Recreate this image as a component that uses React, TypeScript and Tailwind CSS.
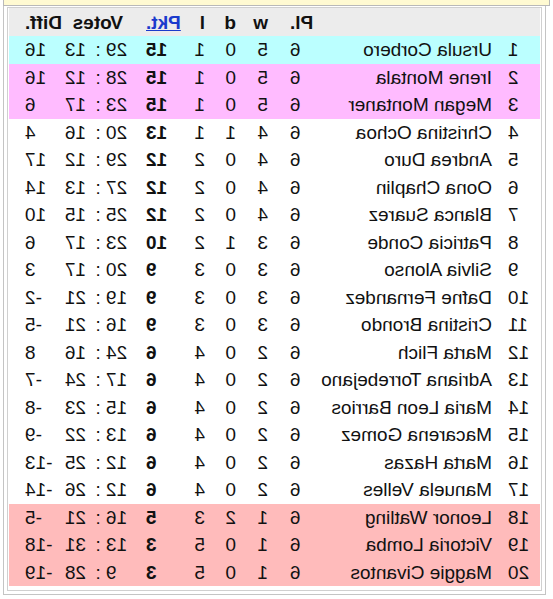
import React from "react";

type Row = [number, string, number, number, number, number, number, number, number, number, string];

const rows: Row[] = [
  [1, "Ursula Corbero", 6, 5, 0, 1, 15, 29, 13, 16, "bg-[#bbffff]"],
  [2, "Irene Montala", 6, 5, 0, 1, 15, 28, 12, 16, "bg-[#ffbbff]"],
  [3, "Megan Montaner", 6, 5, 0, 1, 15, 23, 17, 6, "bg-[#ffbbff]"],
  [4, "Christina Ochoa", 6, 4, 1, 1, 13, 20, 16, 4, "bg-white"],
  [5, "Andrea Duro", 6, 4, 0, 2, 12, 29, 12, 17, "bg-white"],
  [6, "Oona Chaplin", 6, 4, 0, 2, 12, 27, 13, 14, "bg-white"],
  [7, "Blanca Suarez", 6, 4, 0, 2, 12, 25, 15, 10, "bg-white"],
  [8, "Patricia Conde", 6, 3, 1, 2, 10, 23, 17, 6, "bg-white"],
  [9, "Silvia Alonso", 6, 3, 0, 3, 9, 20, 17, 3, "bg-white"],
  [10, "Dafne Fernandez", 6, 3, 0, 3, 9, 19, 21, -2, "bg-white"],
  [11, "Cristina Brondo", 6, 3, 0, 3, 9, 16, 21, -5, "bg-white"],
  [12, "Marta Flich", 6, 2, 0, 4, 6, 24, 16, 8, "bg-white"],
  [13, "Adriana Torrebejano", 6, 2, 0, 4, 6, 17, 24, -7, "bg-white"],
  [14, "Maria Leon Barrios", 6, 2, 0, 4, 6, 15, 23, -8, "bg-white"],
  [15, "Macarena Gomez", 6, 2, 0, 4, 6, 13, 22, -9, "bg-white"],
  [16, "Marta Hazas", 6, 2, 0, 4, 6, 12, 25, -13, "bg-white"],
  [17, "Manuela Velles", 6, 2, 0, 4, 6, 12, 26, -14, "bg-white"],
  [18, "Leonor Watling", 6, 1, 2, 3, 5, 16, 21, -5, "bg-[#ffbbbb]"],
  [19, "Victoria Lomba", 6, 1, 0, 5, 3, 13, 31, -18, "bg-[#ffbbbb]"],
  [20, "Maggie Civantos", 6, 1, 0, 5, 3, 9, 28, -19, "bg-[#ffbbbb]"],
];

export default function App() {
  return (
    <div className="w-[553px] h-[599px] bg-white overflow-hidden -scale-x-100 font-['Liberation_Sans',Arial,sans-serif] text-[19px] leading-none text-[#111]">
      <div className="mx-[3px] h-[6px] bg-[#fffad2] border-x border-b border-[#b9b9b9]" />
      <div className="ml-[7px] mr-[3px] border-x border-b border-[#c4c4c4] px-[3px] pt-[1px] pb-[3px]">
        <div className="border border-[#d0d0d0] px-[1px] pb-[4px]">
          <div className="flex h-[28px] items-center bg-[#ececec] font-bold">
            <div className="w-[220px]" />
            <div className="w-[30px] text-right">Pl.</div>
            <div className="w-[54px] pl-[22px]">w</div>
            <div className="w-[31px]">d</div>
            <div className="w-[17px]">l</div>
            <div className="w-[42px] text-right">
              <span className="text-[#1a3acc] underline">Pkt.</span>
            </div>
            <div className="w-[84px] pl-[23px]">Votes</div>
            <div className="w-[37px] text-right">Diff.</div>
          </div>
          {rows.map((r) => (
            <div key={r[0]} className={`flex h-[27.5px] items-center ${r[10]}`}>
              <div className="w-[32px] text-right">{r[0]}</div>
              <div className="w-[188px] pl-[16px] whitespace-nowrap">{r[1]}</div>
              <div className="w-[30px] text-right">{r[2]}</div>
              <div className="w-[54px] pl-[22px]">{r[3]}</div>
              <div className="w-[31px]">{r[4]}</div>
              <div className="w-[17px]">{r[5]}</div>
              <div className="w-[42px] text-right font-bold">{r[6]}</div>
              <div className="w-[40px] text-right">{r[7]}</div>
              <div className="w-[16px] text-center">:</div>
              <div className="w-[28px] pl-[4px]">{r[8]}</div>
              <div className="w-[37px] text-right">{r[9]}</div>
            </div>
          ))}
        </div>
      </div>
    </div>
  );
}
